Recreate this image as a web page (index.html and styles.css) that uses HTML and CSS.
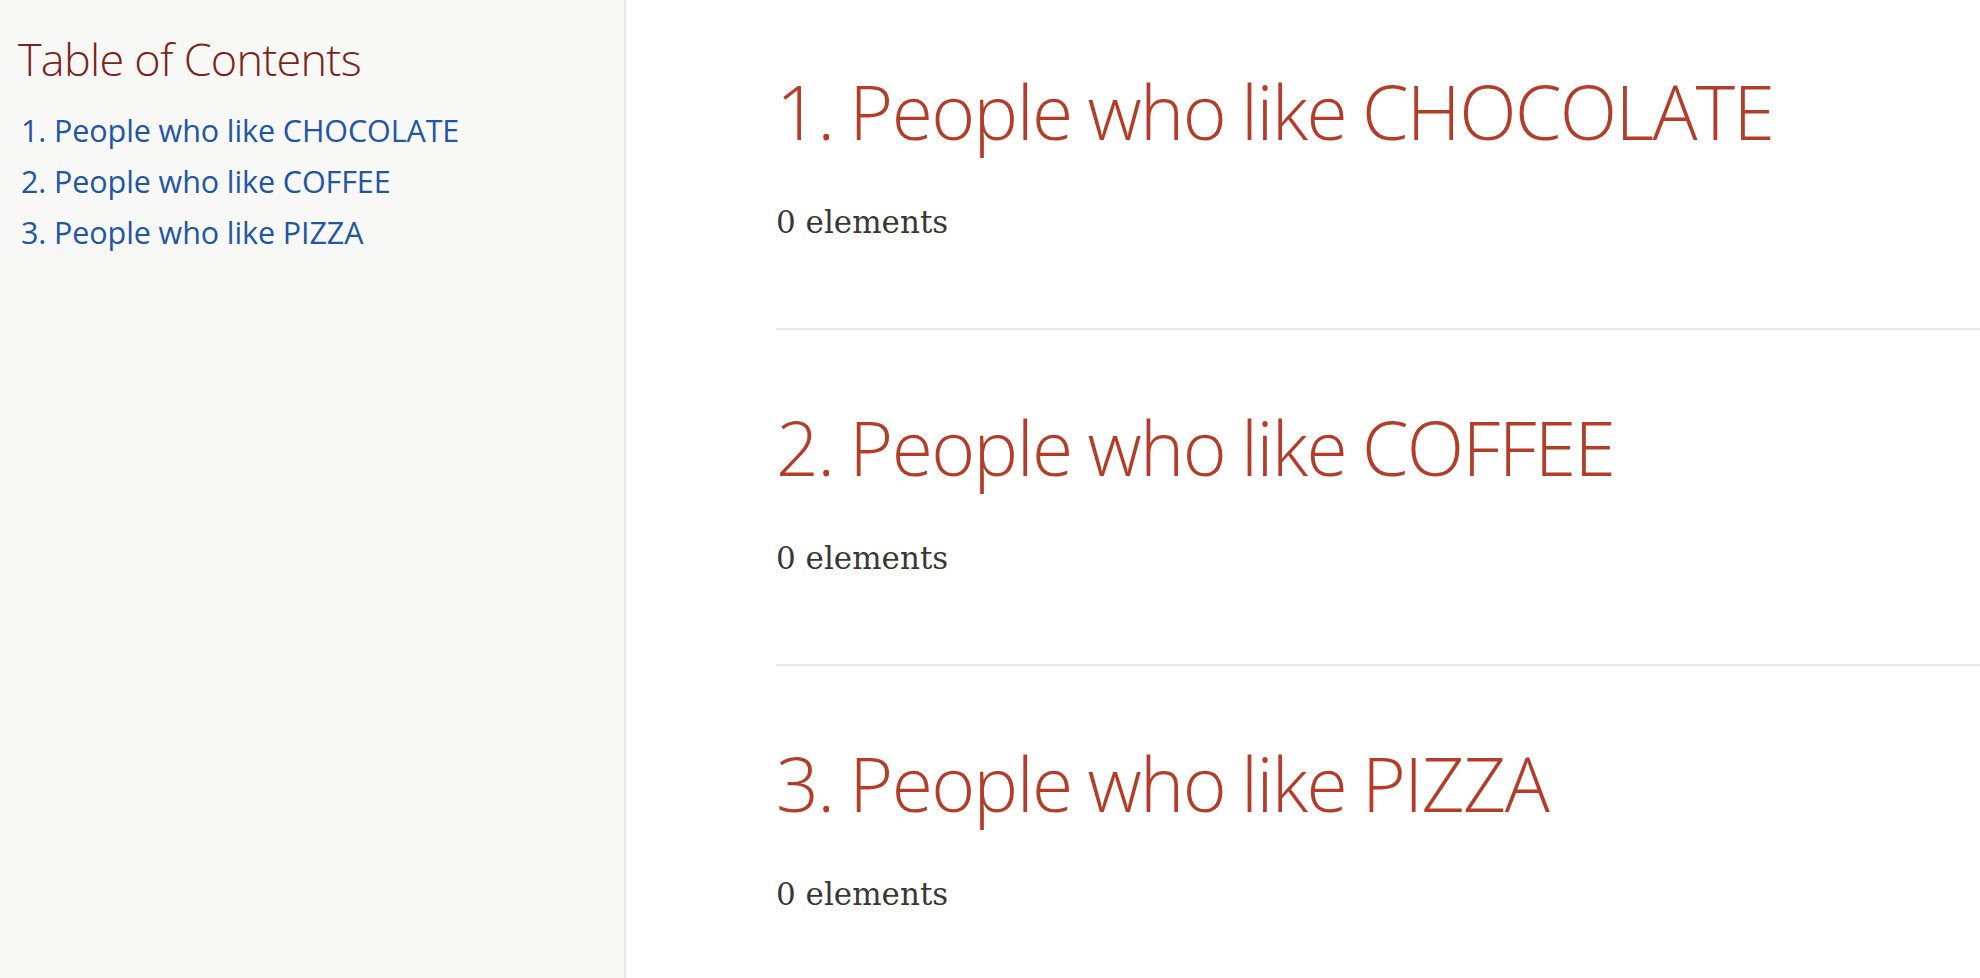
FILE: index.html
```html
<!DOCTYPE html>
<html lang="en">
<head>
<meta charset="utf-8">
<title>People</title>
<link rel="stylesheet" href="styles.css">
</head>
<body>
<div class="page">
  <aside class="toc">
    <div class="toc-title">Table of Contents</div>
    <ul class="toc-list">
      <li><a href="#chocolate">1. People who like CHOCOLATE</a></li>
      <li><a href="#coffee">2. People who like COFFEE</a></li>
      <li><a href="#pizza">3. People who like PIZZA</a></li>
    </ul>
  </aside>
  <main class="content">
    <section class="sect" id="chocolate">
      <h2 class="sect-title">1. People who like CHOCOLATE</h2>
      <p class="sect-text">0 elements</p>
    </section>
    <section class="sect" id="coffee">
      <h2 class="sect-title">2. People who like COFFEE</h2>
      <p class="sect-text">0 elements</p>
    </section>
    <section class="sect" id="pizza">
      <h2 class="sect-title">3. People who like PIZZA</h2>
      <p class="sect-text">0 elements</p>
    </section>
  </main>
</div>
</body>
</html>
```

FILE: styles.css
```css
html, body {
  margin: 0;
  padding: 0;
  background: #ffffff;
  height: 100%;
  overflow: hidden;
}

.page {
  display: flex;
  min-height: 100vh;
}

.toc {
  flex: 0 0 626px;
  background: #f8f8f7;
  border-right: 2px solid #e7e7e9;
  padding: 32px 0 0 18px;
  box-sizing: border-box;
}

.toc-title {
  font-family: "Open Sans", "DejaVu Sans", sans-serif;
  font-weight: 300;
  font-size: 45px;
  line-height: 54px;
  letter-spacing: -0.75px;
  color: #7a2518;
}

.toc-list {
  list-style: none;
  margin: 19px 0 0 3px;
  padding: 0;
}

.toc-list li {
  font-family: "Open Sans", "DejaVu Sans", sans-serif;
  font-size: 30.5px;
  line-height: 51px;
  letter-spacing: -0.1px;
}

.toc-list a {
  color: #2156a5;
  text-decoration: none;
}

.content {
  flex: 1 1 auto;
  padding: 66px 0 0 150px;
  min-width: 0;
}

.sect {
  padding-bottom: 80px;
}

.sect + .sect {
  border-top: 2px solid #e7e7e9;
  padding-top: 72px;
}

.sect-title {
  margin: 0;
  font-family: "Open Sans", "DejaVu Sans", sans-serif;
  font-weight: 300;
  font-size: 75px;
  line-height: 90px;
  letter-spacing: -1.6px;
  word-spacing: -2px;
  color: #b33d29;
  white-space: nowrap;
}

.sect-text {
  margin: 40px 0 0;
  font-family: "DejaVu Serif", "Liberation Serif", serif;
  font-size: 31px;
  line-height: 52px;
  color: rgba(0, 0, 0, 0.8);
}
```
